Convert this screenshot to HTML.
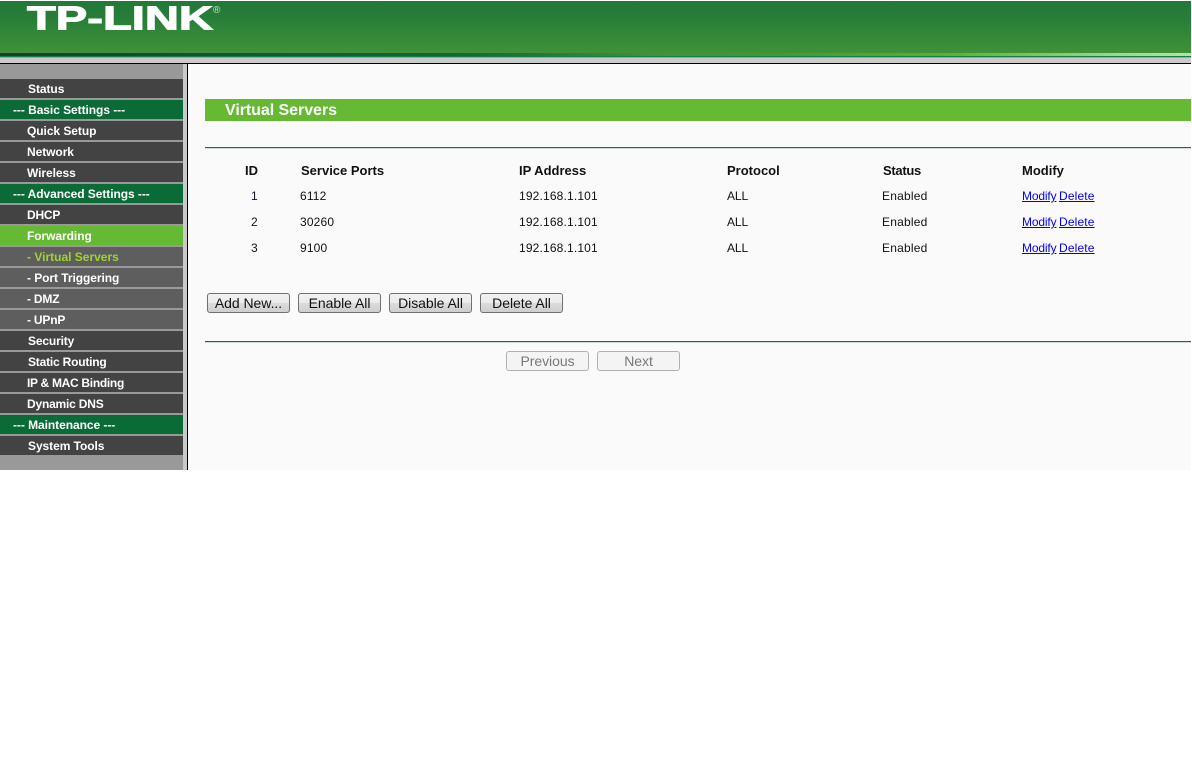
<!DOCTYPE html>
<html><head><meta charset="utf-8"><style>
html,body{margin:0;padding:0;width:1192px;height:768px;overflow:hidden;background:#fff;font-family:"Liberation Sans",Arial,sans-serif}
div,span,a{position:absolute;white-space:nowrap}
#hd{left:0;top:1px;width:1191px;height:52px;background:linear-gradient(#227a38 0,#267c38 14px,#3f9238 52px)}
.l{left:0;width:1191px}
.m{left:0;width:183px;height:19px;line-height:21px;font-size:12px;font-weight:bold;color:#fff;background:#434343;text-indent:27px;letter-spacing:-.06px}
.g{background:#0b6b37;text-indent:13px}
.s{background:#5e5e5e}
.h{font-size:13px;font-weight:bold;color:#111;line-height:16px}
.t{font-size:12px;color:#111;line-height:14px;letter-spacing:.16px}
a.t{color:#00e;text-decoration:underline;letter-spacing:0}
.b{box-sizing:border-box;height:20px;border:1px solid #707070;border-radius:3px;background:linear-gradient(#f2f2f2,#ebebeb 50%,#dcdcdc 50%,#cfcfcf);font-size:14px;line-height:18px;text-align:center;color:#111;letter-spacing:-.05px}
.d{border-color:#adb2b5;background:#f4f4f4;color:#777}
</style></head><body>
<div id="hd"></div>
<div class="l" style="top:53px;height:3px;background:linear-gradient(90deg,#1d3d2a 0,#14583a 300px,#0f6a38 470px,#3f9238 650px,#3f9a36 780px,#5fb030 950px,#a4d68e 1120px,#b8e2a2 1191px)"></div>
<div class="l" style="top:56px;height:1px;background:#138048"></div>
<div class="l" style="top:57px;height:1px;background:#9aa89f"></div>
<div class="l" style="top:58px;height:5px;background:#cbcbcb"></div>
<div class="l" style="top:63px;height:1px;background:#000"></div>
<svg style="position:absolute;left:0;top:0" width="240" height="40"><text x="27" y="29.5" font-family="Liberation Sans" font-weight="bold" font-size="33" fill="#fff" stroke="#fff" stroke-width="1" textLength="186" lengthAdjust="spacingAndGlyphs">TP-LINK</text><text x="213" y="13" font-family="Liberation Sans" font-size="10" fill="#cfe6cf">®</text></svg>
<div style="left:0;top:64px;width:183px;height:406px;background:#999"></div>
<div style="left:183px;top:64px;width:4px;height:406px;background:#c9c9c9"></div>
<div style="left:187px;top:64px;width:1px;height:406px;background:#000"></div>
<div style="left:188px;top:64px;width:1003px;height:406px;background:#fafafa"></div>

<div class="m" style="top:79px;text-indent:28px">Status</div>
<div class="m g" style="top:100px">--- Basic Settings ---</div>
<div class="m" style="top:121px">Quick Setup</div>
<div class="m" style="top:142px">Network</div>
<div class="m" style="top:163px">Wireless</div>
<div class="m g" style="top:184px">--- Advanced Settings ---</div>
<div class="m" style="top:205px;letter-spacing:-.2px">DHCP</div>
<div class="m" style="top:226px;background:#66b932">Forwarding</div>
<div class="m s" style="top:247px;color:#9fd32e;letter-spacing:0">- Virtual Servers</div>
<div class="m s" style="top:268px">- Port Triggering</div>
<div class="m s" style="top:289px;letter-spacing:-.2px">- DMZ</div>
<div class="m s" style="top:310px;letter-spacing:-.2px">- UPnP</div>
<div class="m" style="top:331px;text-indent:28px;letter-spacing:-.15px">Security</div>
<div class="m" style="top:352px;text-indent:28px;letter-spacing:-.2px">Static Routing</div>
<div class="m" style="top:373px;letter-spacing:-.3px">IP &amp; MAC Binding</div>
<div class="m" style="top:394px;letter-spacing:-.2px">Dynamic DNS</div>
<div class="m g" style="top:415px">--- Maintenance ---</div>
<div class="m" style="top:436px;text-indent:28px">System Tools</div>

<div style="left:205px;top:99px;width:986px;height:22px;background:#66b932;color:#fff;font-size:16px;font-weight:bold;line-height:23px;text-indent:20px;letter-spacing:-.05px">Virtual Servers</div>
<div style="left:205px;top:147px;width:986px;height:1px;background:#1d6b4a"></div>
<div style="left:205px;top:148px;width:986px;height:1px;background:#cfdcd5"></div>

<span class="h" style="left:245px;top:163px">ID</span>
<span class="h" style="left:301px;top:163px">Service Ports</span>
<span class="h" style="left:519px;top:163px">IP Address</span>
<span class="h" style="left:727px;top:163px">Protocol</span>
<span class="h" style="left:883px;top:163px;letter-spacing:-.3px">Status</span>
<span class="h" style="left:1022px;top:163px">Modify</span>

<span class="t" style="left:251px;top:189px;color:#112">1</span><span class="t" style="left:300px;top:189px">6112</span><span class="t" style="left:519px;top:189px">192.168.1.101</span><span class="t" style="left:727px;top:189px;letter-spacing:-.1px">ALL</span><span class="t" style="left:882px;top:189px;letter-spacing:.2px">Enabled</span><a class="t" style="left:1022px;top:189px;letter-spacing:-.15px">Modify</a><a class="t" style="left:1059px;top:189px;letter-spacing:.15px">Delete</a>
<span class="t" style="left:251px;top:215px;color:#112">2</span><span class="t" style="left:300px;top:215px">30260</span><span class="t" style="left:519px;top:215px">192.168.1.101</span><span class="t" style="left:727px;top:215px;letter-spacing:-.1px">ALL</span><span class="t" style="left:882px;top:215px;letter-spacing:.2px">Enabled</span><a class="t" style="left:1022px;top:215px;letter-spacing:-.15px">Modify</a><a class="t" style="left:1059px;top:215px;letter-spacing:.15px">Delete</a>
<span class="t" style="left:251px;top:241px;color:#112">3</span><span class="t" style="left:300px;top:241px">9100</span><span class="t" style="left:519px;top:241px">192.168.1.101</span><span class="t" style="left:727px;top:241px;letter-spacing:-.1px">ALL</span><span class="t" style="left:882px;top:241px;letter-spacing:.2px">Enabled</span><a class="t" style="left:1022px;top:241px;letter-spacing:-.15px">Modify</a><a class="t" style="left:1059px;top:241px;letter-spacing:.15px">Delete</a>

<div class="b" style="left:207px;top:293px;width:83px">Add New...</div>
<div class="b" style="left:298px;top:293px;width:83px">Enable All</div>
<div class="b" style="left:389px;top:293px;width:83px">Disable All</div>
<div class="b" style="left:480px;top:293px;width:83px">Delete All</div>
<div style="left:205px;top:341px;width:986px;height:1px;background:#1d6b4a"></div>
<div style="left:205px;top:342px;width:986px;height:1px;background:#cfdcd5"></div>
<div class="b d" style="left:506px;top:351px;width:83px">Previous</div>
<div class="b d" style="left:597px;top:351px;width:83px">Next</div>
</body></html>
